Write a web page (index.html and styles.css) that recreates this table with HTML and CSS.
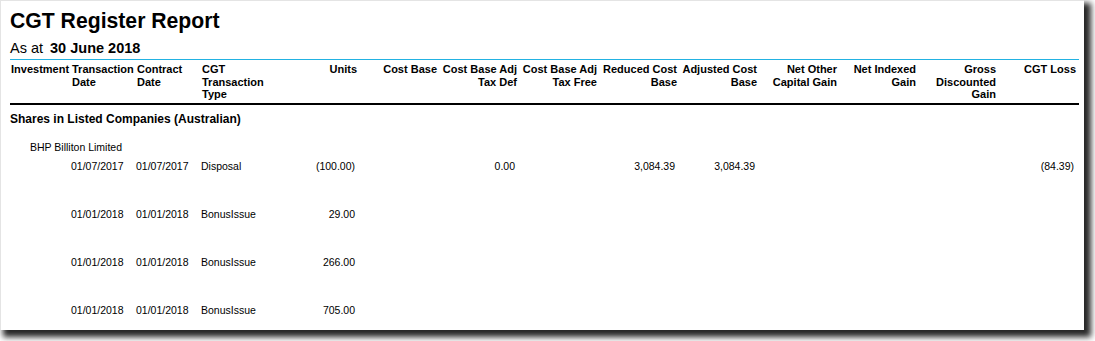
FILE: index.html
```html
<!DOCTYPE html>
<html lang="en">
<head>
<meta charset="utf-8">
<title>CGT Register Report</title>
<link rel="stylesheet" href="styles.css">
</head>
<body>
<div class="page">
  <header class="report-head">
    <h1 class="title">CGT Register Report</h1>
    <div class="asat">As at<span class="asat-date">30 June 2018</span></div>
  </header>

  <div class="grid head-row">
    <div class="cell txt">Investment</div>
    <div class="cell txt">Transaction Date</div>
    <div class="cell txt">Contract Date</div>
    <div class="cell txt">CGT Transaction Type</div>
    <div class="cell num">Units</div>
    <div class="cell num">Cost Base</div>
    <div class="cell num">Cost Base Adj Tax Def</div>
    <div class="cell num">Cost Base Adj Tax Free</div>
    <div class="cell num">Reduced Cost Base</div>
    <div class="cell num">Adjusted Cost Base</div>
    <div class="cell num">Net Other Capital Gain</div>
    <div class="cell num">Net Indexed Gain</div>
    <div class="cell num">Gross Discounted Gain</div>
    <div class="cell num">CGT Loss</div>
  </div>

  <div class="section">Shares in Listed Companies (Australian)</div>
  <div class="investment">BHP Billiton Limited</div>

  <div class="rows">
    <div class="grid data-row">
      <div class="cell txt"></div>
      <div class="cell txt">01/07/2017</div>
      <div class="cell txt">01/07/2017</div>
      <div class="cell txt">Disposal</div>
      <div class="cell num">(100.00)</div>
      <div class="cell num"></div>
      <div class="cell num">0.00</div>
      <div class="cell num"></div>
      <div class="cell num">3,084.39</div>
      <div class="cell num">3,084.39</div>
      <div class="cell num"></div>
      <div class="cell num"></div>
      <div class="cell num"></div>
      <div class="cell num">(84.39)</div>
    </div>
    <div class="grid data-row">
      <div class="cell txt"></div>
      <div class="cell txt">01/01/2018</div>
      <div class="cell txt">01/01/2018</div>
      <div class="cell txt">BonusIssue</div>
      <div class="cell num">29.00</div>
      <div class="cell num"></div><div class="cell num"></div><div class="cell num"></div>
      <div class="cell num"></div><div class="cell num"></div><div class="cell num"></div>
      <div class="cell num"></div><div class="cell num"></div><div class="cell num"></div>
    </div>
    <div class="grid data-row">
      <div class="cell txt"></div>
      <div class="cell txt">01/01/2018</div>
      <div class="cell txt">01/01/2018</div>
      <div class="cell txt">BonusIssue</div>
      <div class="cell num">266.00</div>
      <div class="cell num"></div><div class="cell num"></div><div class="cell num"></div>
      <div class="cell num"></div><div class="cell num"></div><div class="cell num"></div>
      <div class="cell num"></div><div class="cell num"></div><div class="cell num"></div>
    </div>
    <div class="grid data-row">
      <div class="cell txt"></div>
      <div class="cell txt">01/01/2018</div>
      <div class="cell txt">01/01/2018</div>
      <div class="cell txt">BonusIssue</div>
      <div class="cell num">705.00</div>
      <div class="cell num"></div><div class="cell num"></div><div class="cell num"></div>
      <div class="cell num"></div><div class="cell num"></div><div class="cell num"></div>
      <div class="cell num"></div><div class="cell num"></div><div class="cell num"></div>
    </div>
  </div>
</div>
</body>
</html>
```

FILE: styles.css
```css
html, body {
  margin: 0;
  padding: 0;
  background: #ffffff;
}

body {
  width: 1095px;
  height: 341px;
  overflow: hidden;
  font-family: "Liberation Sans", Arial, sans-serif;
  color: #000;
}

.page {
  width: 1084px;
  height: 330px;
  box-sizing: border-box;
  background: #fff;
  border-top: 1px solid #e4e4e4;
  border-left: 1px solid #e4e4e4;
  padding: 8px 5px 0 9px;
  overflow: hidden;
  box-shadow: 5px 5px 6px 2px rgba(0, 0, 0, 0.85);
}

.report-head {
  border-bottom: 1px solid #22b2e2;
  padding-bottom: 2px;
}

.title {
  margin: 0;
  font-size: 21.2px;
  line-height: 24px;
  font-weight: bold;
}

.asat {
  margin-top: 7px;
  font-size: 14.5px;
  line-height: 17px;
}

.asat-date {
  font-weight: bold;
  margin-left: 7px;
}

.grid {
  display: grid;
  grid-template-columns: 61px 65px 65px 79px 80px 80px 80px 80px 80px 80px 80px 79px 80px 80px;
}

.head-row {
  font-size: 11px;
  line-height: 12.65px;
  font-weight: bold;
  padding: 3px 0 2px;
  border-bottom: 2px solid #000;
}

.head-row .txt {
  padding-left: 1px;
}

.head-row .num {
  text-align: right;
  padding-right: 3px;
}

.section {
  margin-top: 7px;
  font-size: 12px;
  line-height: 14px;
  font-weight: bold;
}

.investment {
  margin-top: 15px;
  padding-left: 20px;
  font-size: 10.5px;
  line-height: 12px;
}

.rows {
  margin-top: 7.4px;
}

.data-row {
  height: 47.75px;
  font-size: 10.5px;
  line-height: 12px;
}

.data-row .num {
  text-align: right;
  padding-right: 5px;
}
```
